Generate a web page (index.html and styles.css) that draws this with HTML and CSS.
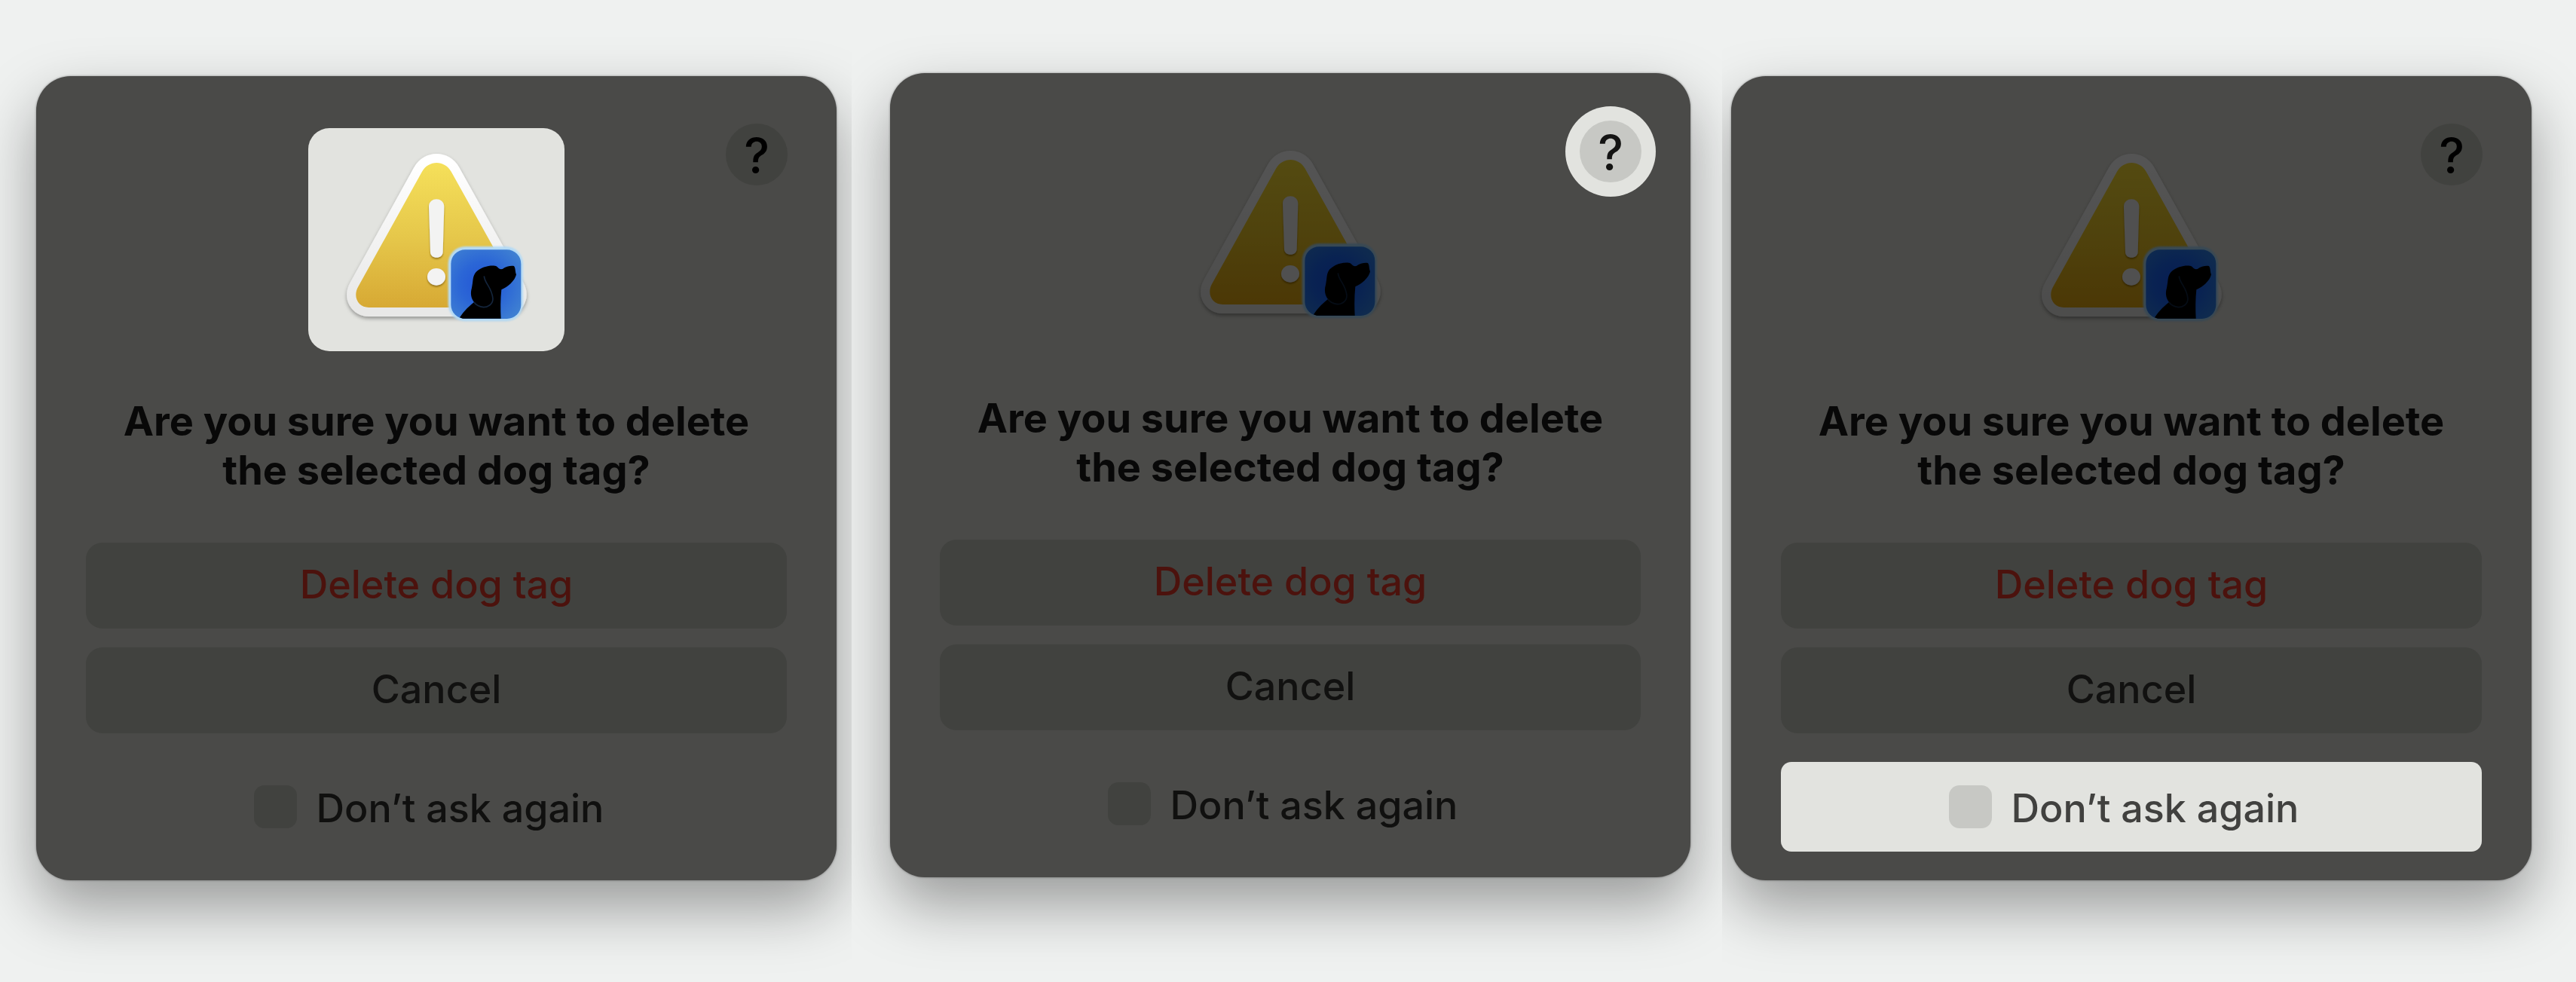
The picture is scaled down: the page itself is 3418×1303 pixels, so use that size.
FILE: index.html
```html
<!DOCTYPE html>
<html lang="en">
<head>
<meta charset="utf-8">
<meta name="viewport" content="width=device-width, initial-scale=1">
<title>Delete dog tag</title>
<link rel="stylesheet" href="styles.css">
</head>
<body>
<svg class="sprite" aria-hidden="true">
  <defs>
    <linearGradient id="rim" x1="0" y1="0" x2="0" y2="1">
      <stop offset="0" stop-color="#ffffff"/>
      <stop offset="1" stop-color="#e8e8e7"/>
    </linearGradient>
    <linearGradient id="yellow" x1="0" y1="0" x2="0" y2="1">
      <stop offset="0" stop-color="#f5e05a"/>
      <stop offset="0.5" stop-color="#e6c84b"/>
      <stop offset="1" stop-color="#d7a934"/>
    </linearGradient>
    <radialGradient id="blue" cx="0.45" cy="0.5" r="0.65">
      <stop offset="0" stop-color="#2355d6"/>
      <stop offset="0.5" stop-color="#2b66d6"/>
      <stop offset="1" stop-color="#3f80d2"/>
    </radialGradient>
    <filter id="soft" x="-20%" y="-20%" width="140%" height="140%">
      <feDropShadow dx="0" dy="8" stdDeviation="8" flood-color="#000" flood-opacity="0.35"/>
    </filter>
    <filter id="mark" x="-50%" y="-20%" width="200%" height="150%">
      <feDropShadow dx="0" dy="6" stdDeviation="3" flood-color="#6b4c00" flood-opacity="0.6"/>
    </filter>
    <filter id="glow" x="-10%" y="-10%" width="120%" height="120%">
      <feGaussianBlur stdDeviation="3"/>
    </filter>
    <symbol id="warning" viewBox="57 59 1020 888">
      <path filter="url(#soft)" fill="url(#rim)" stroke="url(#rim)" stroke-width="72" stroke-linejoin="round" d="M510 232C537 185 599 185 626 232L881 690C905 733 875 773 838 773H298C258 773 232 733 256 690Z"/>
      <path fill="url(#yellow)" d="M510 232C537 185 599 185 626 232L881 690C905 733 875 773 838 773H298C258 773 232 733 256 690Z"/>
      <g filter="url(#mark)" fill="#f3f3f2">
        <path d="M537 372C537 332 598 332 598 372L593 552C593 582 543 582 543 552Z"/>
        <ellipse cx="567" cy="651" rx="36" ry="34"/>
      </g>
      <rect x="614" y="530" width="298" height="298" rx="68" fill="#b4daf5" filter="url(#glow)"/>
      <rect x="625" y="543" width="279" height="275" rx="56" fill="url(#blue)"/>
      <path d="M660 813C678 785 700 765 717 752C704 735 702 715 708 695C714 670 710 650 724 633C745 612 775 605 800 607C815 609 812 623 830 620C845 610 860 606 876 608C883 618 880 630 885 642C880 667 850 692 826 702C822 740 822 780 824 817H672Z"/>
      <path fill="none" stroke="#14253c" stroke-width="5" d="M757 648C760 680 787 690 792 738C792 762 770 772 755 772C737 770 724 762 717 752"/>
    </symbol>
  </defs>
</svg>

<main class="board">
  <section class="panel panel-icon">
    <form class="dialog">
      <header class="dialog-top">
        <div class="icon-box lit"><svg class="icon" role="img" aria-label="Warning"><use href="#warning"/></svg></div>
        <div class="help-ring"><button class="help" type="button" aria-label="Help">?</button></div>
      </header>
      <div class="dialog-body">
        <h2 class="title">Are you sure you want to delete<br>the selected dog tag?</h2>
        <div class="actions">
          <button class="btn danger" type="button">Delete dog tag</button>
          <button class="btn" type="button">Cancel</button>
        </div>
        <label class="ask" for="ask-1"><input class="check" id="ask-1" type="checkbox"><span class="ask-text">Don’t ask again</span></label>
      </div>
    </form>
  </section>

  <section class="panel panel-help">
    <form class="dialog">
      <header class="dialog-top">
        <div class="icon-box"><svg class="icon" role="img" aria-label="Warning"><use href="#warning"/></svg></div>
        <div class="help-ring lit"><button class="help" type="button" aria-label="Help">?</button></div>
      </header>
      <div class="dialog-body">
        <h2 class="title">Are you sure you want to delete<br>the selected dog tag?</h2>
        <div class="actions">
          <button class="btn danger" type="button">Delete dog tag</button>
          <button class="btn" type="button">Cancel</button>
        </div>
        <label class="ask" for="ask-2"><input class="check" id="ask-2" type="checkbox"><span class="ask-text">Don’t ask again</span></label>
      </div>
    </form>
  </section>

  <section class="panel panel-ask">
    <form class="dialog">
      <header class="dialog-top">
        <div class="icon-box"><svg class="icon" role="img" aria-label="Warning"><use href="#warning"/></svg></div>
        <div class="help-ring"><button class="help" type="button" aria-label="Help">?</button></div>
      </header>
      <div class="dialog-body">
        <h2 class="title">Are you sure you want to delete<br>the selected dog tag?</h2>
        <div class="actions">
          <button class="btn danger" type="button">Delete dog tag</button>
          <button class="btn" type="button">Cancel</button>
        </div>
        <label class="ask lit" for="ask-3"><input class="check" id="ask-3" type="checkbox"><span class="ask-text">Don’t ask again</span></label>
      </div>
    </form>
  </section>
</main>
</body>
</html>
```
FILE: styles.css
```css
:root {
  --page: #eff1f0;
  --dim: #4a4a48;
  --dim-control: #41423f;
  --lit: #e2e3df;
  --lit-control: #c7c8c4;
}

* {
  box-sizing: border-box;
}

body {
  margin: 0;
  background: var(--page);
  font-family: Inter, "Liberation Sans", sans-serif;
  font-size: 52px;
  font-weight: 450;
  line-height: 65px;
}

.sprite {
  position: absolute;
  width: 0;
  height: 0;
}

.board {
  display: grid;
  grid-template-columns: 1130fr 1155fr 1133fr;
  min-height: 100vh;
}

.panel {
  overflow: hidden;
  padding-bottom: 135px;
}

.panel-icon {
  padding-top: 101px;
  padding-left: 48px;
  padding-right: 20px;
}

.panel-help {
  padding-top: 97px;
  padding-left: 51px;
  padding-right: 42px;
}

.panel-ask {
  padding-top: 101px;
  padding-left: 12px;
  padding-right: 59px;
}

.dialog {
  padding: 44px 0 38px;
  border-radius: 46px;
  background: var(--dim);
  box-shadow: 0 36px 80px rgba(0, 0, 0, 0.36), 0 0 3px rgba(0, 0, 0, 0.4);
}

.dialog-top {
  display: grid;
  grid-template-columns: 1fr auto 1fr;
  align-items: start;
  padding: 0 46px;
}

.icon-box {
  grid-column: 2;
  margin-top: 25px;
  border-radius: 28px;
}

.icon {
  display: block;
  width: 340px;
  height: 296px;
}

.icon-box:not(.lit) .icon {
  filter: brightness(0.33) saturate(1.3);
}

.help-ring {
  display: grid;
  place-items: center;
  justify-self: end;
  width: 120px;
  height: 120px;
  border-radius: 50%;
}

.help {
  width: 82px;
  height: 82px;
  padding: 4px 0 0;
  border: 0;
  border-radius: 50%;
  background: var(--dim-control);
  color: #000;
  font: 500 64px/78px Inter, "Liberation Sans", sans-serif;
}

.lit {
  background: var(--lit);
}

.lit .help,
.lit .check {
  background: var(--lit-control);
}

.lit .help {
  color: #141413;
}

.dialog-body {
  padding: 0 66px;
}

.title {
  margin: 60px 0 64px;
  color: #080808;
  font-size: 54px;
  font-weight: 700;
  text-align: center;
}

.actions {
  display: grid;
  gap: 25px;
}

.btn {
  height: 114px;
  padding: 0 0 4px;
  border: 0;
  border-radius: 22px;
  background: var(--dim-control);
  color: #111110;
  font: inherit;
}

.danger {
  color: #4c120d;
}

.ask {
  display: flex;
  align-items: center;
  justify-content: center;
  gap: 26px;
  height: 119px;
  margin-top: 38px;
  padding-right: 20px;
  border-radius: 14px;
  color: #10100f;
}

.ask.lit {
  color: #41413f;
}

.ask-text {
  padding-top: 4px;
}

.check {
  appearance: none;
  width: 57px;
  height: 57px;
  margin: 0;
  border-radius: 14px;
  background: var(--dim-control);
}
```
